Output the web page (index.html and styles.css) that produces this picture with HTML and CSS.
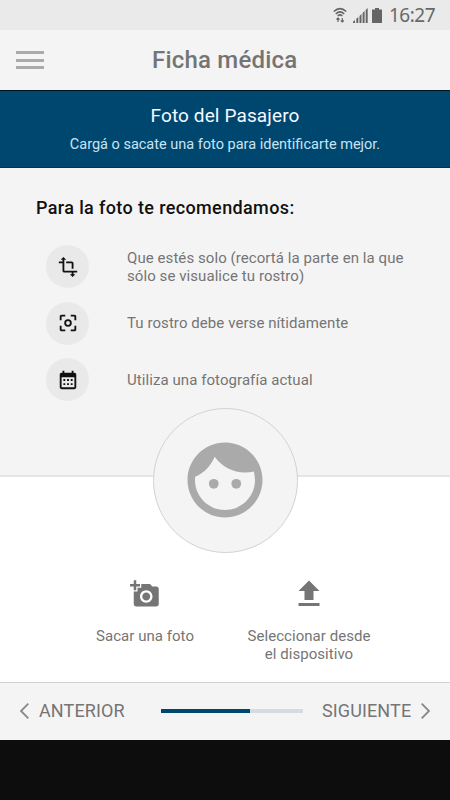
FILE: index.html
```html
<!DOCTYPE html>
<html lang="es">
<head>
<meta charset="utf-8">
<title>Ficha médica</title>
<link rel="stylesheet" href="styles.css">
</head>
<body>
<div class="status">
  <svg class="wifi" width="14" height="16" viewBox="0 0 14 16" fill="none" stroke="#656565" stroke-width="1.6"><path d="M.8 4.500Q7-1.400 13.200 4.500M2.800 7Q7 2.900 11.200 7M4.700 9Q7 6.900 9.300 9"/><path d="M5 15v-4M9.300 11v4M3.500 12.500L5 11l1.500 1.500M7.800 13.500l1.500 1.500 1.500-1.500" stroke-width="1.200"/></svg>
  <svg class="signal" width="15" height="15" viewBox="0 0 15 15" fill="#656565"><path d="M0 15v-1.200L2 12v3zM3.300 15v-4.300l2-1.700v6zM6.500 15V8l2-2v9zM9.600 15V5l2-2v12zM12.700 15V2l2-2v15z"/></svg>
  <svg class="battery" width="10" height="15" viewBox="0 0 10 15" fill="#656565"><path d="M3 0h4v1.500h3V15H0V1.500h3z"/></svg>
  <span class="clock">16:27</span>
</div>
<header class="header">
  <div class="menu"><i></i><i></i><i></i></div>
  <h1>Ficha médica</h1>
</header>
<section class="banner">
  <h2>Foto del Pasajero</h2>
  <p>Cargá o sacate una foto para identificarte mejor.</p>
</section>
<section class="tips">
  <h3>Para la foto te recomendamos:</h3>
  <ul>
    <li><span class="disc"><svg width="22" height="22" viewBox="0 0 24 24"><path d="M22 18v-2H8V4h2L7 1 4 4h2v2H2v2h4v8c0 1.100.9 2 2 2h8v2h-2l3 3 3-3h-2v-2h4zM10 8h6v6h2V8c0-1.100-.9-2-2-2h-6v2z"/></svg></span><p>Que estés solo (recortá la parte en la que <br>sólo se visualice tu rostro)</p></li>
    <li><span class="disc"><svg width="22" height="22" viewBox="0 0 24 24"><path d="M5 15H3v4c0 1.100.9 2 2 2h4v-2H5v-4zM5 5h4V3H5c-1.100 0-2 .9-2 2v4h2V5zM19 3h-4v2h4v4h2V5c0-1.100-.9-2-2-2zM19 19h-4v2h4c1.100 0 2-.9 2-2v-4h-2v4z"/><circle cx="12" cy="12" r="3.100" fill="none" stroke="#111" stroke-width="2"/></svg></span><p>Tu rostro debe verse nítidamente</p></li>
    <li><span class="disc"><svg width="22" height="22" viewBox="0 0 24 24"><path fill-rule="evenodd" d="M19 4h-1V2h-2v2H8V2H6v2H5c-1.100 0-2 .9-2 2v14c0 1.100.9 2 2 2h14c1.100 0 2-.9 2-2V6c0-1.100-.9-2-2-2zM5 9h14v11H5zM7 11h2v2H7zM11 11h2v2h-2zM15 11h2v2h-2zM7 15.500h2v2H7zM11 15.500h2v2h-2zM15 15.500h2v2h-2z"/></svg></span><p>Utiliza una fotografía actual</p></li>
  </ul>
</section>
<main class="upload">
  <div class="avatar"><svg width="90" height="90" viewBox="0 0 24 24"><circle cx="9" cy="13" r="1.300"/><circle cx="15" cy="13" r="1.300"/><path d="M12 2C6.480 2 2 6.480 2 12s4.480 10 10 10 10-4.480 10-10S17.520 2 12 2zm0 18c-4.410 0-8-3.590-8-8 0-.29.020-.58.050-.86 2.360-1.050 4.230-2.980 5.210-5.370C11.070 8.330 14.050 10 17.420 10c.78 0 1.530-.09 2.250-.26.210.71.330 1.470.330 2.260 0 4.410-3.590 8-8 8z"/></svg></div>
  <div class="actions">
    <div class="action">
      <svg width="30" height="30" viewBox="0 0 24 24"><path d="M3 4V1h2v3h3v2H5v3H3V6H0V4h3zm3 6V7h3V4h7l1.830 2H21c1.100 0 2 .9 2 2v12c0 1.100-.9 2-2 2H5c-1.100 0-2-.9-2-2V10h3zm7 9c2.760 0 5-2.240 5-5s-2.240-5-5-5-5 2.240-5 5 2.240 5 5 5zm-3.200-5c0 1.770 1.430 3.200 3.200 3.200s3.200-1.430 3.200-3.200-1.430-3.200-3.200-3.200-3.200 1.430-3.200 3.200z"/></svg>
      <p>Sacar una foto</p>
    </div>
    <div class="action">
      <svg width="36" height="36" viewBox="0 0 24 24"><path d="M9 16h6v-6h4l-7-7-7 7h4zM5 18h14v2H5z"/></svg>
      <p>Seleccionar desde<br>el dispositivo</p>
    </div>
  </div>
</main>
<footer class="footer">
  <svg width="9" height="16" viewBox="0 0 9 16"><path d="M8.300.7L1 8l7.300 7.300"/></svg>
  <span class="prev">ANTERIOR</span>
  <div class="track"><div class="fill"></div></div>
  <span class="next">SIGUIENTE</span>
  <svg width="9" height="16" viewBox="0 0 9 16"><path d="M.7.7L8 8 .7 15.300"/></svg>
</footer>
</body>
</html>
```

FILE: styles.css
```css
* { box-sizing: border-box; margin: 0; padding: 0; }
body { width: 450px; height: 800px; overflow: hidden; background: #0d0d0d; font-family: Roboto, "Liberation Sans", sans-serif; color: #757575; font-size: 15px; }
svg { display: block; flex: none; }
h1, h2, h3, p, span { white-space: nowrap; }
.status { height: 30px; background: #eaeaea; display: flex; justify-content: flex-end; align-items: center; padding-right: 15px; color: #686868; }
.signal { margin-left: 6px; }
.battery { margin-left: 4px; }
.clock { width: 46px; margin-left: 7px; font: 19px/30px "Noto Sans", sans-serif; letter-spacing: -.5px; }
.header { height: 60px; background: #f4f4f4; display: flex; align-items: center; padding-left: 16px; }
.menu { width: 28px; display: grid; gap: 4.500px; }
.menu i { height: 3px; background: #aaa; }
h1 { margin-left: 108px; font-size: 24px; line-height: 60px; font-weight: 500; letter-spacing: .2px; color: #747474; }
.banner { height: 78px; border-top: 1px solid #001320; border-bottom: 1px solid #003354; background: #00476f; text-align: center; color: #f5faff; padding-top: 12px; }
h2 { font-weight: 400; font-size: 19px; line-height: 26px; letter-spacing: .12px; }
.banner p { color: #c8e4f4; font-size: 14.500px; line-height: 20px; margin-top: 6px; }
.tips { height: 309px; background: #f4f4f4; border-bottom: 2px solid #e6e6e6; padding: 28px 0 0 36px; }
h3 { font-size: 18px; line-height: 24px; font-weight: 500; letter-spacing: .37px; color: #111; }
ul { list-style: none; padding: 25px 0 0 10px; display: grid; gap: 13.500px; }
li { display: flex; align-items: center; height: 43px; gap: 38px; line-height: 18px; letter-spacing: .07px; }
.disc { width: 43px; height: 43px; border-radius: 50%; background: #e9e9e9; display: grid; place-items: center; fill: #111; flex: none; }
.upload { height: 205px; background: #fff; display: flex; flex-direction: column; align-items: center; }
.avatar { width: 145px; height: 145px; margin-top: -69px; border: 1px solid #d2d2d2; border-radius: 50%; background: #f4f4f4; display: grid; place-items: center; fill: #aaa; flex: none; }
.avatar svg { margin-bottom: 1px; }
.actions { display: grid; grid-template-columns: 164px 164px; margin-top: 23px; margin-left: 4px; }
.action { display: flex; flex-direction: column; align-items: center; fill: #757575; text-align: center; line-height: 18px; letter-spacing: .04px; }
.action svg { height: 36px; }
.action p { margin-top: 15px; }
.footer { height: 58px; background: #f4f4f4; border-top: 1px solid #d2d2d2; display: flex; align-items: center; padding: 0 20px 2px; font-size: 18px; fill: none; stroke: #888; stroke-width: 1.800; }
.prev { margin-left: 10px; width: 86px; letter-spacing: .12px; }
.track { margin: 0 19px 0 36px; width: 142px; height: 4px; background: #d3dce2; }
.fill { width: 63%; height: 100%; background: #00476f; }
.next { width: 90px; margin-right: 9px; letter-spacing: .12px; }
```
